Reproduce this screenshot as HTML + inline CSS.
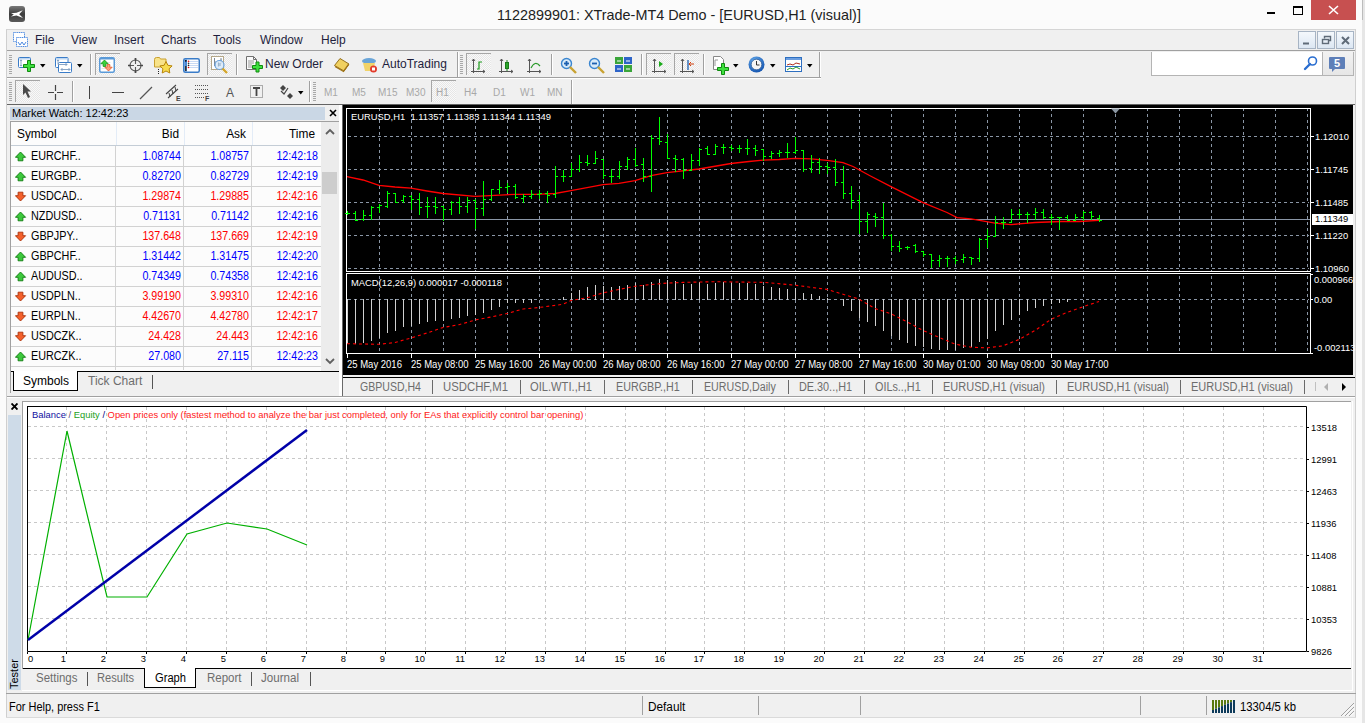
<!DOCTYPE html><html><head><meta charset="utf-8"><style>
*{margin:0;padding:0;box-sizing:border-box}
html,body{width:1365px;height:723px;overflow:hidden;background:#fbfbfb;font-family:"Liberation Sans", sans-serif;position:relative}
div{position:absolute}
.t{white-space:pre;font-size:11px;line-height:13px;color:#000}
svg{position:absolute;left:0;top:0}

</style></head><body>
<div style="left:0px;top:0px;width:1362px;height:29px;background:#fbfbfb"></div>
<div style="left:1362px;top:0px;width:3px;height:723px;background:#e6e6e6"></div>
<div style="left:1362px;top:0px;width:1px;height:20px;background:#bcbcbc"></div>
<div class="t" style="left:497px;top:6px;font-size:14.4px;line-height:18px;color:#222">1122899901: XTrade-MT4 Demo - [EURUSD,H1 (visual)]</div>
<div style="left:9px;top:6px;width:16px;height:16px;border-radius:3px;background:linear-gradient(#7a7a7a,#3c3c3c 50%,#5a5a5a)"></div>
<svg style="left:9px;top:6px" width="16" height="16"><path d="M2 7.2 L7.5 6.8 L13.8 4.2 L10.2 8.2 L14 12 L7.5 9.6 L2 10.4 L4.8 8.6Z" fill="#fff"/></svg>
<div style="left:1267px;top:12px;width:8px;height:2px;background:#000"></div>
<div style="left:1293px;top:6px;width:10px;height:9px;border:1px solid #000;border-top-width:2px"></div>
<div style="left:1311px;top:0px;width:45px;height:20px;background:#c75050"></div>
<svg style="left:1311px;top:0" width="45" height="20"><path d="M18 6 L27 14 M27 6 L18 14" stroke="#fff" stroke-width="1.6"/></svg>
<div style="left:6px;top:29px;width:1350px;height:694px;background:#f0f0f0;border-left:1px solid #cfcfcf;border-right:1px solid #cfcfcf;border-top:1px solid #d5d5d5"></div>
<div style="left:1356px;top:29px;width:6px;height:694px;background:#fbfbfb"></div>
<div class="t" style="left:35px;top:33px;font-size:12px;line-height:15px;color:#1e1e3c">File</div>
<div class="t" style="left:71px;top:33px;font-size:12px;line-height:15px;color:#1e1e3c">View</div>
<div class="t" style="left:114px;top:33px;font-size:12px;line-height:15px;color:#1e1e3c">Insert</div>
<div class="t" style="left:161px;top:33px;font-size:12px;line-height:15px;color:#1e1e3c">Charts</div>
<div class="t" style="left:213px;top:33px;font-size:12px;line-height:15px;color:#1e1e3c">Tools</div>
<div class="t" style="left:260px;top:33px;font-size:12px;line-height:15px;color:#1e1e3c">Window</div>
<div class="t" style="left:321px;top:33px;font-size:12px;line-height:15px;color:#1e1e3c">Help</div>
<div style="left:7px;top:50px;width:1348px;height:1px;background:#a0a0a0"></div>
<div style="left:7px;top:51px;width:1348px;height:1px;background:#fff"></div>
<div style="left:7px;top:104px;width:1348px;height:1px;background:#a0a0a0"></div>
<div style="left:7px;top:51px;width:1348px;height:26px;background:#f0f0f0"></div>
<div style="left:9px;top:55px;width:3px;height:1px;background:#a8a8a8"></div>
<div style="left:9px;top:57px;width:3px;height:1px;background:#a8a8a8"></div>
<div style="left:9px;top:59px;width:3px;height:1px;background:#a8a8a8"></div>
<div style="left:9px;top:61px;width:3px;height:1px;background:#a8a8a8"></div>
<div style="left:9px;top:63px;width:3px;height:1px;background:#a8a8a8"></div>
<div style="left:9px;top:65px;width:3px;height:1px;background:#a8a8a8"></div>
<div style="left:9px;top:67px;width:3px;height:1px;background:#a8a8a8"></div>
<div style="left:9px;top:69px;width:3px;height:1px;background:#a8a8a8"></div>
<div style="left:9px;top:71px;width:3px;height:1px;background:#a8a8a8"></div>
<div style="left:9px;top:73px;width:3px;height:1px;background:#a8a8a8"></div>
<svg style="left:17px;top:56px" width="20" height="17">
<rect x="1.5" y="1.5" width="12" height="10" rx="1" fill="#fff" stroke="#3a7cc8"/>
<rect x="2" y="2" width="11" height="1.5" fill="#bcd6f2"/>
<path d="M4 4v6M3 5l1-1.2 1 1.2M3 9l1 1.2 1-1.2" stroke="#7d9cc0" fill="none" stroke-width="0.9"/>
<path d="M6.5 8.5h4v-4h3v4h4v3h-4v4h-3v-4h-4z" fill="#3ee03e" stroke="#0f8a0f" stroke-width="1"/>
</svg>
<svg style="left:40px;top:64px" width="6" height="4"><path d="M0 0H5.5L2.75 3.5Z" fill="#000"/></svg>
<svg style="left:54px;top:56px" width="20" height="18">
<rect x="1.5" y="1.5" width="12.5" height="10" rx="1" fill="#fff" stroke="#3a7cc8"/>
<rect x="2" y="2" width="11.5" height="1.5" fill="#bcd6f2"/>
<rect x="4.5" y="6.5" width="13" height="10" rx="1" fill="#fff" stroke="#3a7cc8"/>
<path d="M4 4v4.5h9M11.5 7l1.5 1.5-1.5 1.5M7 13.5h9M8.5 12l-1.5 1.5 1.5 1.5M14.5 12l1.5 1.5-1.5 1.5M3 5l1-1.2 1 1.2" stroke="#7d9cc0" fill="none" stroke-width="0.9"/>
</svg>
<svg style="left:77px;top:64px" width="6" height="4"><path d="M0 0H5.5L2.75 3.5Z" fill="#000"/></svg>
<div style="left:90px;top:54px;width:1px;height:21px;background:#a0a0a0"></div>
<div style="left:91px;top:54px;width:1px;height:21px;background:#fff"></div>
<div style="left:95px;top:53px;width:25px;height:22px;border-top:1px solid #a6a6a6;border-left:1px solid #a6a6a6;background-color:#f6f6f6;background-image:repeating-conic-gradient(#e6e6e6 0 25%,#f9f9f9 0 50%);background-size:2px 2px"></div>
<svg style="left:99px;top:57px" width="16" height="16">
<rect x="0.75" y="0.75" width="14.5" height="14.5" rx="1.5" fill="#fff" stroke="#5a9ad8" stroke-width="1.5"/>
<rect x="1" y="1" width="14" height="1.5" fill="#5a9ad8"/>
<path d="M2.5 5.5h9M2.5 8.5h9M2.5 11.5h9" stroke="#e6e6e6"/>
<path d="M1.8 6.8L5.5 3L9.2 6.8H6.8V9.5H4.2V6.8Z" fill="#3ad43a" stroke="#0a8a0a" stroke-width="0.7" stroke-linejoin="round"/>
<path d="M5.8 10.2L9.5 14L13.2 10.2H10.8V7.5H8.2V10.2Z" fill="#ffa080" stroke="#e04a10" stroke-width="0.7" stroke-linejoin="round"/>
</svg>
<svg style="left:127px;top:57px" width="17" height="17">
<circle cx="8.5" cy="8.5" r="5.5" fill="none" stroke="#5a5a5a" stroke-width="1.1"/><path d="M8.5 1v6M8.5 10v6M1 8.5h6M10 8.5h6" stroke="#5a5a5a" stroke-width="1.1"/>
<path d="M8.5 1v3M8.5 13v3M1 8.5h3M13 8.5h3" stroke="#484848" stroke-width="1.7"/>
</svg>
<svg style="left:153px;top:56px" width="21" height="19">
<path d="M1.5 3.5q0-2 2-2h3l1 1.5h5.5v8h-11.5z" fill="#f8e38a" stroke="#c9a030"/>
<path d="M5.5 13v1M5.5 15v1M5.5 17v1" stroke="#222"/>
<path d="M13 5.5l1.9 3.8 4.2.6-3 2.9.7 4.2-3.8-2-3.8 2 .7-4.2-3-2.9 4.2-.6z" fill="#f7dc50" stroke="#b8860b" stroke-width="1"/>
</svg>
<svg style="left:183px;top:58px" width="17" height="15">
<rect x="0.75" y="0.75" width="15.5" height="13.5" rx="1.5" fill="#fff" stroke="#3a7cc8" stroke-width="1.5"/>
<rect x="1.5" y="1.5" width="2.5" height="12" fill="#4a8ad8"/><rect x="2" y="8" width="1.5" height="5" fill="#333"/>
<path d="M6 3.5h9M6 5.5h9M6 7.5h9M6 9.5h9" stroke="#c8daf4"/>
<circle cx="2.8" cy="2.8" r="0.9" fill="#000"/><circle cx="5.5" cy="3.2" r="0.8" fill="#e00"/><circle cx="5.5" cy="5.3" r="0.8" fill="#222"/><circle cx="5.5" cy="7.4" r="0.8" fill="#222"/><circle cx="5.5" cy="9.5" r="0.8" fill="#e00"/>
</svg>
<div style="left:207px;top:53px;width:25px;height:22px;border-top:1px solid #a6a6a6;border-left:1px solid #a6a6a6;background-color:#f6f6f6;background-image:repeating-conic-gradient(#e6e6e6 0 25%,#f9f9f9 0 50%);background-size:2px 2px"></div>
<svg style="left:211px;top:56px" width="19" height="19">
<rect x="0.5" y="0.5" width="12" height="13" fill="#fff" stroke="#b5a88a"/>
<path d="M3.5 2v8M3 6h2M10 2v6M9.5 4h1" stroke="#7a8a9a"/>
<circle cx="8.5" cy="9" r="4.5" fill="#d8e9f8" fill-opacity="0.85" stroke="#6aa0d8" stroke-width="1.2"/>
<path d="M7.5 6.5v4M9 7v3" stroke="#9ab4cc" stroke-width="1.2"/>
<path d="M11.5 12.5l4.5 4.5" stroke="#d4a72c" stroke-width="2.4"/>
</svg>
<div style="left:236px;top:54px;width:1px;height:21px;background:#a0a0a0"></div>
<div style="left:237px;top:54px;width:1px;height:21px;background:#fff"></div>
<svg style="left:245px;top:55px" width="20" height="21">
<path d="M1.5 1.5h7l3 3v10h-10z" fill="#fafafa" stroke="#707070"/><path d="M8.5 1.5v3h3" fill="none" stroke="#707070"/>
<path d="M3 6h6M3 8h6M3 10h4M3 12h4" stroke="#9a9a9a"/>
<path d="M7.5 10.5h3.5v-3.5h3v3.5h3.5v3h-3.5v3.5h-3v-3.5h-3.5z" fill="#3ee03e" stroke="#0f8a0f" stroke-width="1"/>
</svg>
<div class="t" style="left:265px;top:57px;font-size:12px;line-height:15px;color:#1e1e3c">New Order</div>
<svg style="left:333px;top:56px" width="18" height="18">
<path d="M1.5 9.5l5.5-7 9 5.5-5 7z" fill="#f0d060" stroke="#8a6410" stroke-width="0.9"/><path d="M2 10.5l8.5 5 5-7" fill="none" stroke="#a07418" stroke-width="1.3"/>
</svg>
<svg style="left:361px;top:56px" width="18" height="18">
<ellipse cx="8" cy="5" rx="7" ry="3" fill="#6aa5d8"/><path d="M2 7h12l-2 8h-8z" fill="#f1d36a"/>
<circle cx="12.5" cy="13" r="3.5" fill="#e23b2b"/><rect x="11" y="11.5" width="3" height="3" fill="#fff"/>
</svg>
<div class="t" style="left:382px;top:57px;font-size:12px;line-height:15px;color:#1e1e3c">AutoTrading</div>
<div style="left:457px;top:52px;width:1px;height:25px;background:#a0a0a0"></div>
<div style="left:458px;top:52px;width:1px;height:25px;background:#fff"></div>
<div style="left:460px;top:55px;width:3px;height:1px;background:#a8a8a8"></div>
<div style="left:460px;top:57px;width:3px;height:1px;background:#a8a8a8"></div>
<div style="left:460px;top:59px;width:3px;height:1px;background:#a8a8a8"></div>
<div style="left:460px;top:61px;width:3px;height:1px;background:#a8a8a8"></div>
<div style="left:460px;top:63px;width:3px;height:1px;background:#a8a8a8"></div>
<div style="left:460px;top:65px;width:3px;height:1px;background:#a8a8a8"></div>
<div style="left:460px;top:67px;width:3px;height:1px;background:#a8a8a8"></div>
<div style="left:460px;top:69px;width:3px;height:1px;background:#a8a8a8"></div>
<div style="left:460px;top:71px;width:3px;height:1px;background:#a8a8a8"></div>
<div style="left:460px;top:73px;width:3px;height:1px;background:#a8a8a8"></div>
<div style="left:466px;top:53px;width:25px;height:22px;border-top:1px solid #a6a6a6;border-left:1px solid #a6a6a6;background-color:#f6f6f6;background-image:repeating-conic-gradient(#e6e6e6 0 25%,#f9f9f9 0 50%);background-size:2px 2px"></div>
<svg style="left:471px;top:58px" width="16" height="16">
<path d="M2.5 1v14M0 13.5h14" stroke="#555" stroke-width="1"/><path d="M1 3l1.5-2 1.5 2M12 12l2 1.5-2 1.5" fill="none" stroke="#555"/><path d="M6 11h2v-7h3" fill="none" stroke="#1a9a1a" stroke-width="1.2"/></svg>
<svg style="left:499px;top:58px" width="16" height="16">
<path d="M2.5 1v14M0 13.5h14" stroke="#555" stroke-width="1"/><path d="M1 3l1.5-2 1.5 2M12 12l2 1.5-2 1.5" fill="none" stroke="#555"/><rect x="6.5" y="4.5" width="3" height="6" fill="#3cd03c" stroke="#1a7a1a"/><path d="M8 2v11" stroke="#1a7a1a"/></svg>
<svg style="left:527px;top:58px" width="16" height="16">
<path d="M2.5 1v14M0 13.5h14" stroke="#555" stroke-width="1"/><path d="M1 3l1.5-2 1.5 2M12 12l2 1.5-2 1.5" fill="none" stroke="#555"/><path d="M4 10q4-8 9-2" fill="none" stroke="#2a9a2a" stroke-width="1.2"/></svg>
<div style="left:551px;top:54px;width:1px;height:21px;background:#a0a0a0"></div>
<div style="left:552px;top:54px;width:1px;height:21px;background:#fff"></div>
<svg style="left:560px;top:57px" width="18" height="18">
<circle cx="6.5" cy="6.5" r="5" fill="#d8eaf8" stroke="#3a86d0" stroke-width="1.4"/><path d="M4 6.5h5" stroke="#1b5fb0" stroke-width="1.8"/><path d="M6.5 4v5" stroke="#1b5fb0" stroke-width="1.8"/><path d="M10 10l6 6" stroke="#c9a232" stroke-width="2.4"/></svg>
<svg style="left:588px;top:57px" width="18" height="18">
<circle cx="6.5" cy="6.5" r="5" fill="#d8eaf8" stroke="#3a86d0" stroke-width="1.4"/><path d="M4 6.5h5" stroke="#1b5fb0" stroke-width="1.8"/><path d="M10 10l6 6" stroke="#c9a232" stroke-width="2.4"/></svg>
<svg style="left:615px;top:57px" width="17" height="16">
<rect x="0" y="0" width="8" height="7" fill="#3aa53a"/><rect x="9" y="0" width="8" height="7" fill="#2d64c8"/>
<rect x="0" y="8" width="8" height="7" fill="#2d64c8"/><rect x="9" y="8" width="8" height="7" fill="#3aa53a"/>
<path d="M2 4h4M11 4h4M2 12h4M11 12h4" stroke="#fff"/></svg>
<div style="left:641px;top:54px;width:1px;height:21px;background:#a0a0a0"></div>
<div style="left:642px;top:54px;width:1px;height:21px;background:#fff"></div>
<div style="left:646px;top:53px;width:25px;height:22px;border-top:1px solid #a6a6a6;border-left:1px solid #a6a6a6;background-color:#f6f6f6;background-image:repeating-conic-gradient(#e6e6e6 0 25%,#f9f9f9 0 50%);background-size:2px 2px"></div>
<svg style="left:652px;top:58px" width="16" height="16">
<path d="M2.5 1v14M0 13.5h14" stroke="#555" stroke-width="1"/><path d="M1 3l1.5-2 1.5 2M12 12l2 1.5-2 1.5" fill="none" stroke="#555"/><path d="M7 3l4 3-4 3z" fill="#1aaa1a"/></svg>
<div style="left:674px;top:53px;width:25px;height:22px;border-top:1px solid #a6a6a6;border-left:1px solid #a6a6a6;background-color:#f6f6f6;background-image:repeating-conic-gradient(#e6e6e6 0 25%,#f9f9f9 0 50%);background-size:2px 2px"></div>
<svg style="left:680px;top:58px" width="16" height="16">
<path d="M2.5 1v14M0 13.5h14" stroke="#555" stroke-width="1"/><path d="M1 3l1.5-2 1.5 2M12 12l2 1.5-2 1.5" fill="none" stroke="#555"/><path d="M8 2v10" stroke="#1b5fb0" stroke-width="1.3"/><path d="M14 6h-4M11 4l-2 2 2 2" stroke="#d04010" fill="none"/></svg>
<div style="left:703px;top:54px;width:1px;height:21px;background:#a0a0a0"></div>
<div style="left:704px;top:54px;width:1px;height:21px;background:#fff"></div>
<svg style="left:712px;top:56px" width="18" height="19">
<path d="M1.5 0.5h7l3 3v10h-10z" fill="#fff" stroke="#888"/><path d="M3 4v6M3 4h3" stroke="#999"/>
<path d="M5.5 11.5h4v-4h3v4h4v3h-4v4h-3v-4h-4z" fill="#3ee03e" stroke="#0f8a0f" stroke-width="1"/>
</svg>
<svg style="left:733px;top:64px" width="6" height="4"><path d="M0 0H5.5L2.75 3.5Z" fill="#000"/></svg>
<svg style="left:748px;top:56px" width="18" height="18">
<defs><radialGradient id="cg" cx="0.4" cy="0.3" r="0.8"><stop offset="0" stop-color="#6ab0f0"/><stop offset="1" stop-color="#0a4aa8"/></radialGradient></defs><circle cx="8.5" cy="8.5" r="8" fill="url(#cg)"/><circle cx="8.5" cy="8.5" r="5.3" fill="#f4f4f4" stroke="#0a3a80" stroke-width="0.6"/><path d="M8.5 5v4h3" stroke="#333" fill="none"/></svg>
<svg style="left:770px;top:64px" width="6" height="4"><path d="M0 0H5.5L2.75 3.5Z" fill="#000"/></svg>
<svg style="left:785px;top:57px" width="18" height="15">
<rect x="0.5" y="0.5" width="16" height="14" fill="#fff" stroke="#2e6fc0"/><rect x="1" y="1" width="15" height="2" fill="#6c9ee0"/>
<path d="M2 8l3-1 3 1 3-2 4 1" stroke="#b03020" fill="none"/><path d="M1 9.5h15" stroke="#2e6fc0"/><path d="M2 13l3-2 3 1 3-2 4 2" stroke="#2a9a2a" fill="none"/></svg>
<svg style="left:807px;top:64px" width="6" height="4"><path d="M0 0H5.5L2.75 3.5Z" fill="#000"/></svg>
<div style="left:819px;top:52px;width:1px;height:25px;background:#a0a0a0"></div>
<div style="left:820px;top:52px;width:1px;height:25px;background:#fff"></div>
<div style="left:7px;top:77px;width:814px;height:1px;background:#a0a0a0"></div>
<div style="left:7px;top:78px;width:814px;height:1px;background:#fff"></div>
<div style="left:1151px;top:52px;width:171px;height:24px;background:#fff;border:1px solid #b4b4b4;border-right:none;border-top:none"></div>
<svg style="left:1303px;top:55px" width="16" height="16">
<circle cx="9.5" cy="6" r="4" fill="#fff" stroke="#2a6ed0" stroke-width="1.6"/><path d="M7 9l-5 5" stroke="#2a6ed0" stroke-width="2.4" stroke-linecap="round"/></svg>
<div style="left:1322px;top:52px;width:32px;height:24px;background:linear-gradient(#f2f2f2,#e6e6e6);border-left:1px solid #b4b4b4;border-right:1px solid #b4b4b4;border-bottom:1px solid #b4b4b4"></div>
<svg style="left:1329px;top:57px" width="18" height="16">
<rect x="0" y="0" width="16" height="12" rx="1" fill="#5e7fb8"/><path d="M3 12l0 3 3-3z" fill="#5e7fb8"/></svg>
<div class="t" style="left:1334px;top:57px;font-size:11px;line-height:12px;color:#fff;font-weight:bold">5</div>
<div style="left:9px;top:82px;width:3px;height:1px;background:#a8a8a8"></div>
<div style="left:9px;top:84px;width:3px;height:1px;background:#a8a8a8"></div>
<div style="left:9px;top:86px;width:3px;height:1px;background:#a8a8a8"></div>
<div style="left:9px;top:88px;width:3px;height:1px;background:#a8a8a8"></div>
<div style="left:9px;top:90px;width:3px;height:1px;background:#a8a8a8"></div>
<div style="left:9px;top:92px;width:3px;height:1px;background:#a8a8a8"></div>
<div style="left:9px;top:94px;width:3px;height:1px;background:#a8a8a8"></div>
<div style="left:9px;top:96px;width:3px;height:1px;background:#a8a8a8"></div>
<div style="left:9px;top:98px;width:3px;height:1px;background:#a8a8a8"></div>
<div style="left:9px;top:100px;width:3px;height:1px;background:#a8a8a8"></div>
<div style="left:15px;top:80px;width:25px;height:22px;border-top:1px solid #a6a6a6;border-left:1px solid #a6a6a6;background-color:#f6f6f6;background-image:repeating-conic-gradient(#e6e6e6 0 25%,#f9f9f9 0 50%);background-size:2px 2px"></div>
<svg style="left:22px;top:84px" width="12" height="15">
<path d="M1 0L1 11 3.5 8.5 6 14 8 13 5.5 7.5 9 7.5Z" fill="#4a4a4a"/></svg>
<svg style="left:47px;top:84px" width="17" height="17">
<path d="M8.5 1v6M8.5 10v6M1 8.5h6M10 8.5h6" stroke="#444" stroke-width="1.2"/></svg>
<div style="left:72px;top:81px;width:1px;height:21px;background:#a0a0a0"></div>
<div style="left:73px;top:81px;width:1px;height:21px;background:#fff"></div>
<div style="left:89px;top:86px;width:1px;height:13px;background:#444"></div>
<div style="left:112px;top:92px;width:12px;height:1px;background:#444"></div>
<svg style="left:139px;top:86px" width="14" height="14"><path d="M1 13L13 1" stroke="#555" stroke-width="1.2"/></svg>
<svg style="left:165px;top:84px" width="18" height="18">
<path d="M1 10L11 1M3 14L13 5" stroke="#444" stroke-width="1.1"/><path d="M4 9l1 4M7 6l1 4M10 3l1 4" stroke="#444"/>
<text x="11" y="17" font-size="7" font-family="Liberation Sans" font-weight="bold" fill="#444">E</text></svg>
<svg style="left:194px;top:84px" width="18" height="18">
<path d="M1 1.5h13M1 5.5h13M1 9.5h13M1 13.5h10" stroke="#555" stroke-dasharray="1 1"/>
<text x="11" y="17" font-size="7" font-family="Liberation Sans" font-weight="bold" fill="#444">F</text></svg>
<div class="t" style="left:226px;top:86px;font-size:12px;line-height:14px;color:#555">A</div>
<svg style="left:250px;top:85px" width="14" height="14">
<rect x="0.5" y="0.5" width="12" height="12" fill="none" stroke="#666" stroke-dasharray="1 1"/>
<path d="M3 3h7M6.5 3v8" stroke="#444" stroke-width="1.8"/></svg>
<svg style="left:279px;top:84px" width="16" height="16">
<path d="M1 4l3-3 3 3-3 3z" fill="#444"/><path d="M8 12l3-3 3 3-3 3z" fill="#444"/><path d="M2 7l3 3 4-6" stroke="#444" fill="none" stroke-width="1.2"/></svg>
<svg style="left:298px;top:91px" width="6" height="4"><path d="M0 0H5.5L2.75 3.5Z" fill="#000"/></svg>
<div style="left:309px;top:81px;width:1px;height:21px;background:#a0a0a0"></div>
<div style="left:310px;top:81px;width:1px;height:21px;background:#fff"></div>
<div style="left:313px;top:82px;width:3px;height:1px;background:#a8a8a8"></div>
<div style="left:313px;top:84px;width:3px;height:1px;background:#a8a8a8"></div>
<div style="left:313px;top:86px;width:3px;height:1px;background:#a8a8a8"></div>
<div style="left:313px;top:88px;width:3px;height:1px;background:#a8a8a8"></div>
<div style="left:313px;top:90px;width:3px;height:1px;background:#a8a8a8"></div>
<div style="left:313px;top:92px;width:3px;height:1px;background:#a8a8a8"></div>
<div style="left:313px;top:94px;width:3px;height:1px;background:#a8a8a8"></div>
<div style="left:313px;top:96px;width:3px;height:1px;background:#a8a8a8"></div>
<div style="left:313px;top:98px;width:3px;height:1px;background:#a8a8a8"></div>
<div style="left:313px;top:100px;width:3px;height:1px;background:#a8a8a8"></div>
<div class="t" style="left:324px;top:87px;font-size:10px;line-height:12px;color:#a8a8a8">M1</div>
<div class="t" style="left:352px;top:87px;font-size:10px;line-height:12px;color:#a8a8a8">M5</div>
<div class="t" style="left:378px;top:87px;font-size:10px;line-height:12px;color:#a8a8a8">M15</div>
<div class="t" style="left:406px;top:87px;font-size:10px;line-height:12px;color:#a8a8a8">M30</div>
<div style="left:431px;top:80px;width:25px;height:22px;border-top:1px solid #a6a6a6;border-left:1px solid #a6a6a6;background-color:#f6f6f6;background-image:repeating-conic-gradient(#e6e6e6 0 25%,#f9f9f9 0 50%);background-size:2px 2px"></div>
<div class="t" style="left:436px;top:87px;font-size:10px;line-height:12px;color:#a8a8a8">H1</div>
<div class="t" style="left:464px;top:87px;font-size:10px;line-height:12px;color:#a8a8a8">H4</div>
<div class="t" style="left:493px;top:87px;font-size:10px;line-height:12px;color:#a8a8a8">D1</div>
<div class="t" style="left:520px;top:87px;font-size:10px;line-height:12px;color:#a8a8a8">W1</div>
<div class="t" style="left:547px;top:87px;font-size:10px;line-height:12px;color:#a8a8a8">MN</div>
<div style="left:571px;top:80px;width:1px;height:24px;background:#a0a0a0"></div>
<div style="left:572px;top:80px;width:1px;height:24px;background:#fff"></div>
<div style="left:7px;top:104px;width:1348px;height:1px;background:#646464"></div>
<div style="left:1298px;top:31px;width:18px;height:18px;background:linear-gradient(#f4f8fc,#dce7f3);border:1px solid #a7b4c4"></div>
<div style="left:1317px;top:31px;width:18px;height:18px;background:linear-gradient(#f4f8fc,#dce7f3);border:1px solid #a7b4c4"></div>
<div style="left:1336px;top:31px;width:18px;height:18px;background:linear-gradient(#f4f8fc,#dce7f3);border:1px solid #a7b4c4"></div>
<svg style="left:1298px;top:31px" width="56" height="18">
<path d="M5 12.5h6" stroke="#5f6b78" stroke-width="2"/>
<rect x="24.5" y="8.5" width="6" height="4" fill="none" stroke="#5f6b78" stroke-width="1.4"/><path d="M26.5 7.5v-2h6v4h-2" fill="none" stroke="#5f6b78" stroke-width="1.4"/>
<path d="M44 6l7 7M51 6l-7 7" stroke="#5f6b78" stroke-width="2"/></svg>
<svg style="left:13px;top:32px" width="16" height="16">
<rect x="0.5" y="0.5" width="11" height="9" fill="#fff" stroke="#4d8ae0" stroke-dasharray="1.2 0.6"/>
<rect x="3.5" y="5.5" width="11" height="9" fill="#fff" stroke="#4d8ae0" stroke-dasharray="1.2 0.6"/>
<path d="M5 10l2 3 2-3 2 3 2-3" stroke="#4d8ae0" fill="none"/></svg>
<div style="left:10px;top:107px;width:315px;height:13px;background:#cad7e5"></div>
<div class="t" style="left:12px;top:107px;font-size:11px;line-height:13px;color:#000">Market Watch: 12:42:23</div>
<svg style="left:329px;top:109px" width="9" height="9"><path d="M1 1l6 6M7 1l-6 6" stroke="#000" stroke-width="1.6"/></svg>
<div style="left:10px;top:121px;width:311px;height:250px;background:#fcfcfc;border-top:1px solid #a0a0a0;border-left:1px solid #a0a0a0"></div>
<div style="left:11px;top:122px;width:310px;height:24px;background:#fcfcfc"></div>
<div style="left:11px;top:145px;width:310px;height:1px;background:#c4cdd6"></div>
<div style="left:116px;top:122px;width:1px;height:23px;background:#e3ecf7"></div>
<div style="left:184px;top:122px;width:1px;height:23px;background:#e3ecf7"></div>
<div style="left:252px;top:122px;width:1px;height:23px;background:#e3ecf7"></div>
<div class="t" style="left:17px;top:127px;font-size:12.5px;line-height:14px;transform:scaleX(0.95);transform-origin:0 0">Symbol</div>
<div class="t" style="left:119px;top:127px;width:60px;text-align:right;font-size:12.5px;line-height:14px;transform:scaleX(0.95);transform-origin:100% 0">Bid</div>
<div class="t" style="left:186px;top:127px;width:60px;text-align:right;font-size:12.5px;line-height:14px;transform:scaleX(0.95);transform-origin:100% 0">Ask</div>
<div class="t" style="left:255px;top:127px;width:60px;text-align:right;font-size:12.5px;line-height:14px;transform:scaleX(0.95);transform-origin:100% 0">Time</div>
<div style="left:11px;top:166px;width:310px;height:1px;background:#d2d2d2"></div>
<svg style="left:15px;top:151px" width="12" height="11"><path d="M5.5 1L10.6 6.3H7.9V9.8H3.1V6.3H0.4Z" fill="#3cc83c" stroke="#0d7a0d" stroke-width="0.9" stroke-linejoin="round"/></svg>
<div class="t" style="left:31px;top:149px;font-size:12px;line-height:14px;color:#000;transform:scaleX(0.9);transform-origin:0 0">EURCHF..</div>
<div class="t" style="left:101px;top:149px;width:80px;text-align:right;color:#0000ff;font-size:12px;line-height:14px;transform:scaleX(0.89);transform-origin:100% 0">1.08744</div>
<div class="t" style="left:169px;top:149px;width:80px;text-align:right;color:#0000ff;font-size:12px;line-height:14px;transform:scaleX(0.89);transform-origin:100% 0">1.08757</div>
<div class="t" style="left:238px;top:149px;width:80px;text-align:right;color:#0000ff;font-size:12px;line-height:14px;transform:scaleX(0.89);transform-origin:100% 0">12:42:18</div>
<div style="left:11px;top:186px;width:310px;height:1px;background:#d2d2d2"></div>
<svg style="left:15px;top:171px" width="12" height="11"><path d="M5.5 1L10.6 6.3H7.9V9.8H3.1V6.3H0.4Z" fill="#3cc83c" stroke="#0d7a0d" stroke-width="0.9" stroke-linejoin="round"/></svg>
<div class="t" style="left:31px;top:169px;font-size:12px;line-height:14px;color:#000;transform:scaleX(0.9);transform-origin:0 0">EURGBP..</div>
<div class="t" style="left:101px;top:169px;width:80px;text-align:right;color:#0000ff;font-size:12px;line-height:14px;transform:scaleX(0.89);transform-origin:100% 0">0.82720</div>
<div class="t" style="left:169px;top:169px;width:80px;text-align:right;color:#0000ff;font-size:12px;line-height:14px;transform:scaleX(0.89);transform-origin:100% 0">0.82729</div>
<div class="t" style="left:238px;top:169px;width:80px;text-align:right;color:#0000ff;font-size:12px;line-height:14px;transform:scaleX(0.89);transform-origin:100% 0">12:42:19</div>
<div style="left:11px;top:206px;width:310px;height:1px;background:#d2d2d2"></div>
<svg style="left:15px;top:191px" width="12" height="11"><path d="M5.5 10L10.6 4.7H7.9V1.2H3.1V4.7H0.4Z" fill="#f4602a" stroke="#a8300a" stroke-width="0.9" stroke-linejoin="round"/></svg>
<div class="t" style="left:31px;top:189px;font-size:12px;line-height:14px;color:#000;transform:scaleX(0.9);transform-origin:0 0">USDCAD..</div>
<div class="t" style="left:101px;top:189px;width:80px;text-align:right;color:#ff0000;font-size:12px;line-height:14px;transform:scaleX(0.89);transform-origin:100% 0">1.29874</div>
<div class="t" style="left:169px;top:189px;width:80px;text-align:right;color:#ff0000;font-size:12px;line-height:14px;transform:scaleX(0.89);transform-origin:100% 0">1.29885</div>
<div class="t" style="left:238px;top:189px;width:80px;text-align:right;color:#ff0000;font-size:12px;line-height:14px;transform:scaleX(0.89);transform-origin:100% 0">12:42:16</div>
<div style="left:11px;top:226px;width:310px;height:1px;background:#d2d2d2"></div>
<svg style="left:15px;top:211px" width="12" height="11"><path d="M5.5 1L10.6 6.3H7.9V9.8H3.1V6.3H0.4Z" fill="#3cc83c" stroke="#0d7a0d" stroke-width="0.9" stroke-linejoin="round"/></svg>
<div class="t" style="left:31px;top:209px;font-size:12px;line-height:14px;color:#000;transform:scaleX(0.9);transform-origin:0 0">NZDUSD..</div>
<div class="t" style="left:101px;top:209px;width:80px;text-align:right;color:#0000ff;font-size:12px;line-height:14px;transform:scaleX(0.89);transform-origin:100% 0">0.71131</div>
<div class="t" style="left:169px;top:209px;width:80px;text-align:right;color:#0000ff;font-size:12px;line-height:14px;transform:scaleX(0.89);transform-origin:100% 0">0.71142</div>
<div class="t" style="left:238px;top:209px;width:80px;text-align:right;color:#0000ff;font-size:12px;line-height:14px;transform:scaleX(0.89);transform-origin:100% 0">12:42:16</div>
<div style="left:11px;top:246px;width:310px;height:1px;background:#d2d2d2"></div>
<svg style="left:15px;top:231px" width="12" height="11"><path d="M5.5 10L10.6 4.7H7.9V1.2H3.1V4.7H0.4Z" fill="#f4602a" stroke="#a8300a" stroke-width="0.9" stroke-linejoin="round"/></svg>
<div class="t" style="left:31px;top:229px;font-size:12px;line-height:14px;color:#000;transform:scaleX(0.9);transform-origin:0 0">GBPJPY..</div>
<div class="t" style="left:101px;top:229px;width:80px;text-align:right;color:#ff0000;font-size:12px;line-height:14px;transform:scaleX(0.89);transform-origin:100% 0">137.648</div>
<div class="t" style="left:169px;top:229px;width:80px;text-align:right;color:#ff0000;font-size:12px;line-height:14px;transform:scaleX(0.89);transform-origin:100% 0">137.669</div>
<div class="t" style="left:238px;top:229px;width:80px;text-align:right;color:#ff0000;font-size:12px;line-height:14px;transform:scaleX(0.89);transform-origin:100% 0">12:42:19</div>
<div style="left:11px;top:266px;width:310px;height:1px;background:#d2d2d2"></div>
<svg style="left:15px;top:251px" width="12" height="11"><path d="M5.5 1L10.6 6.3H7.9V9.8H3.1V6.3H0.4Z" fill="#3cc83c" stroke="#0d7a0d" stroke-width="0.9" stroke-linejoin="round"/></svg>
<div class="t" style="left:31px;top:249px;font-size:12px;line-height:14px;color:#000;transform:scaleX(0.9);transform-origin:0 0">GBPCHF..</div>
<div class="t" style="left:101px;top:249px;width:80px;text-align:right;color:#0000ff;font-size:12px;line-height:14px;transform:scaleX(0.89);transform-origin:100% 0">1.31442</div>
<div class="t" style="left:169px;top:249px;width:80px;text-align:right;color:#0000ff;font-size:12px;line-height:14px;transform:scaleX(0.89);transform-origin:100% 0">1.31475</div>
<div class="t" style="left:238px;top:249px;width:80px;text-align:right;color:#0000ff;font-size:12px;line-height:14px;transform:scaleX(0.89);transform-origin:100% 0">12:42:20</div>
<div style="left:11px;top:286px;width:310px;height:1px;background:#d2d2d2"></div>
<svg style="left:15px;top:271px" width="12" height="11"><path d="M5.5 1L10.6 6.3H7.9V9.8H3.1V6.3H0.4Z" fill="#3cc83c" stroke="#0d7a0d" stroke-width="0.9" stroke-linejoin="round"/></svg>
<div class="t" style="left:31px;top:269px;font-size:12px;line-height:14px;color:#000;transform:scaleX(0.9);transform-origin:0 0">AUDUSD..</div>
<div class="t" style="left:101px;top:269px;width:80px;text-align:right;color:#0000ff;font-size:12px;line-height:14px;transform:scaleX(0.89);transform-origin:100% 0">0.74349</div>
<div class="t" style="left:169px;top:269px;width:80px;text-align:right;color:#0000ff;font-size:12px;line-height:14px;transform:scaleX(0.89);transform-origin:100% 0">0.74358</div>
<div class="t" style="left:238px;top:269px;width:80px;text-align:right;color:#0000ff;font-size:12px;line-height:14px;transform:scaleX(0.89);transform-origin:100% 0">12:42:16</div>
<div style="left:11px;top:306px;width:310px;height:1px;background:#d2d2d2"></div>
<svg style="left:15px;top:291px" width="12" height="11"><path d="M5.5 10L10.6 4.7H7.9V1.2H3.1V4.7H0.4Z" fill="#f4602a" stroke="#a8300a" stroke-width="0.9" stroke-linejoin="round"/></svg>
<div class="t" style="left:31px;top:289px;font-size:12px;line-height:14px;color:#000;transform:scaleX(0.9);transform-origin:0 0">USDPLN..</div>
<div class="t" style="left:101px;top:289px;width:80px;text-align:right;color:#ff0000;font-size:12px;line-height:14px;transform:scaleX(0.89);transform-origin:100% 0">3.99190</div>
<div class="t" style="left:169px;top:289px;width:80px;text-align:right;color:#ff0000;font-size:12px;line-height:14px;transform:scaleX(0.89);transform-origin:100% 0">3.99310</div>
<div class="t" style="left:238px;top:289px;width:80px;text-align:right;color:#ff0000;font-size:12px;line-height:14px;transform:scaleX(0.89);transform-origin:100% 0">12:42:16</div>
<div style="left:11px;top:326px;width:310px;height:1px;background:#d2d2d2"></div>
<svg style="left:15px;top:311px" width="12" height="11"><path d="M5.5 10L10.6 4.7H7.9V1.2H3.1V4.7H0.4Z" fill="#f4602a" stroke="#a8300a" stroke-width="0.9" stroke-linejoin="round"/></svg>
<div class="t" style="left:31px;top:309px;font-size:12px;line-height:14px;color:#000;transform:scaleX(0.9);transform-origin:0 0">EURPLN..</div>
<div class="t" style="left:101px;top:309px;width:80px;text-align:right;color:#ff0000;font-size:12px;line-height:14px;transform:scaleX(0.89);transform-origin:100% 0">4.42670</div>
<div class="t" style="left:169px;top:309px;width:80px;text-align:right;color:#ff0000;font-size:12px;line-height:14px;transform:scaleX(0.89);transform-origin:100% 0">4.42780</div>
<div class="t" style="left:238px;top:309px;width:80px;text-align:right;color:#ff0000;font-size:12px;line-height:14px;transform:scaleX(0.89);transform-origin:100% 0">12:42:17</div>
<div style="left:11px;top:346px;width:310px;height:1px;background:#d2d2d2"></div>
<svg style="left:15px;top:331px" width="12" height="11"><path d="M5.5 10L10.6 4.7H7.9V1.2H3.1V4.7H0.4Z" fill="#f4602a" stroke="#a8300a" stroke-width="0.9" stroke-linejoin="round"/></svg>
<div class="t" style="left:31px;top:329px;font-size:12px;line-height:14px;color:#000;transform:scaleX(0.9);transform-origin:0 0">USDCZK..</div>
<div class="t" style="left:101px;top:329px;width:80px;text-align:right;color:#ff0000;font-size:12px;line-height:14px;transform:scaleX(0.89);transform-origin:100% 0">24.428</div>
<div class="t" style="left:169px;top:329px;width:80px;text-align:right;color:#ff0000;font-size:12px;line-height:14px;transform:scaleX(0.89);transform-origin:100% 0">24.443</div>
<div class="t" style="left:238px;top:329px;width:80px;text-align:right;color:#ff0000;font-size:12px;line-height:14px;transform:scaleX(0.89);transform-origin:100% 0">12:42:16</div>
<div style="left:11px;top:366px;width:310px;height:1px;background:#d2d2d2"></div>
<svg style="left:15px;top:351px" width="12" height="11"><path d="M5.5 1L10.6 6.3H7.9V9.8H3.1V6.3H0.4Z" fill="#3cc83c" stroke="#0d7a0d" stroke-width="0.9" stroke-linejoin="round"/></svg>
<div class="t" style="left:31px;top:349px;font-size:12px;line-height:14px;color:#000;transform:scaleX(0.9);transform-origin:0 0">EURCZK..</div>
<div class="t" style="left:101px;top:349px;width:80px;text-align:right;color:#0000ff;font-size:12px;line-height:14px;transform:scaleX(0.89);transform-origin:100% 0">27.080</div>
<div class="t" style="left:169px;top:349px;width:80px;text-align:right;color:#0000ff;font-size:12px;line-height:14px;transform:scaleX(0.89);transform-origin:100% 0">27.115</div>
<div class="t" style="left:238px;top:349px;width:80px;text-align:right;color:#0000ff;font-size:12px;line-height:14px;transform:scaleX(0.89);transform-origin:100% 0">12:42:23</div>
<div style="left:115px;top:146px;width:1px;height:224px;background:#d2d2d2"></div>
<div style="left:183px;top:146px;width:1px;height:224px;background:#d2d2d2"></div>
<div style="left:251px;top:146px;width:1px;height:224px;background:#d2d2d2"></div>
<div style="left:321px;top:121px;width:18px;height:250px;background:#ececec;border-top:1px solid #a0a0a0"></div>
<div style="left:322px;top:172px;width:15px;height:22px;background:#cdcdcd"></div>
<svg style="left:325px;top:128px" width="10" height="7"><path d="M1 6l4-4 4 4" stroke="#606060" stroke-width="1.8" fill="none"/></svg>
<svg style="left:325px;top:358px" width="10" height="7"><path d="M1 1l4 4 4-4" stroke="#606060" stroke-width="1.8" fill="none"/></svg>
<div style="left:10px;top:371px;width:331px;height:22px;background:#f0f0f0"></div>
<div style="left:77px;top:371px;width:264px;height:1px;background:#000"></div>
<div style="left:13px;top:371px;width:65px;height:20px;background:#fff;border:1px solid #000;border-top:none"></div>
<div style="left:10px;top:371px;width:1px;height:22px;background:#a0a0a0"></div>
<div style="left:11px;top:371px;width:3px;height:1px;background:#000"></div>
<div class="t" style="left:23px;top:374px;font-size:12px;line-height:14px;color:#000">Symbols</div>
<div class="t" style="left:88px;top:374px;font-size:12px;line-height:14px;color:#6d6d6d">Tick Chart</div>
<div style="left:152px;top:375px;width:1px;height:14px;background:#555"></div>
<div style="left:339px;top:105px;width:3px;height:292px;background:#fff"></div>
<div style="left:342px;top:105px;width:1px;height:292px;background:#696969"></div>
<div style="left:343px;top:105px;width:1010px;height:270px;background:#000"></div>
<div style="left:1353px;top:105px;width:2px;height:272px;background:#f0f0f0"></div>
<svg style="left:0;top:0" width="1365" height="723"><path d="M379.5 108V271" stroke="#8a96a6" stroke-dasharray="3 3"/><path d="M379.5 276V353" stroke="#8a96a6" stroke-dasharray="3 3"/><path d="M411.5 108V271" stroke="#8a96a6" stroke-dasharray="3 3"/><path d="M411.5 276V353" stroke="#8a96a6" stroke-dasharray="3 3"/><path d="M443.5 108V271" stroke="#8a96a6" stroke-dasharray="3 3"/><path d="M443.5 276V353" stroke="#8a96a6" stroke-dasharray="3 3"/><path d="M475.5 108V271" stroke="#8a96a6" stroke-dasharray="3 3"/><path d="M475.5 276V353" stroke="#8a96a6" stroke-dasharray="3 3"/><path d="M507.5 108V271" stroke="#8a96a6" stroke-dasharray="3 3"/><path d="M507.5 276V353" stroke="#8a96a6" stroke-dasharray="3 3"/><path d="M539.5 108V271" stroke="#8a96a6" stroke-dasharray="3 3"/><path d="M539.5 276V353" stroke="#8a96a6" stroke-dasharray="3 3"/><path d="M571.5 108V271" stroke="#8a96a6" stroke-dasharray="3 3"/><path d="M571.5 276V353" stroke="#8a96a6" stroke-dasharray="3 3"/><path d="M603.5 108V271" stroke="#8a96a6" stroke-dasharray="3 3"/><path d="M603.5 276V353" stroke="#8a96a6" stroke-dasharray="3 3"/><path d="M635.5 108V271" stroke="#8a96a6" stroke-dasharray="3 3"/><path d="M635.5 276V353" stroke="#8a96a6" stroke-dasharray="3 3"/><path d="M667.5 108V271" stroke="#8a96a6" stroke-dasharray="3 3"/><path d="M667.5 276V353" stroke="#8a96a6" stroke-dasharray="3 3"/><path d="M699.5 108V271" stroke="#8a96a6" stroke-dasharray="3 3"/><path d="M699.5 276V353" stroke="#8a96a6" stroke-dasharray="3 3"/><path d="M731.5 108V271" stroke="#8a96a6" stroke-dasharray="3 3"/><path d="M731.5 276V353" stroke="#8a96a6" stroke-dasharray="3 3"/><path d="M763.5 108V271" stroke="#8a96a6" stroke-dasharray="3 3"/><path d="M763.5 276V353" stroke="#8a96a6" stroke-dasharray="3 3"/><path d="M795.5 108V271" stroke="#8a96a6" stroke-dasharray="3 3"/><path d="M795.5 276V353" stroke="#8a96a6" stroke-dasharray="3 3"/><path d="M827.5 108V271" stroke="#8a96a6" stroke-dasharray="3 3"/><path d="M827.5 276V353" stroke="#8a96a6" stroke-dasharray="3 3"/><path d="M859.5 108V271" stroke="#8a96a6" stroke-dasharray="3 3"/><path d="M859.5 276V353" stroke="#8a96a6" stroke-dasharray="3 3"/><path d="M891.5 108V271" stroke="#8a96a6" stroke-dasharray="3 3"/><path d="M891.5 276V353" stroke="#8a96a6" stroke-dasharray="3 3"/><path d="M923.5 108V271" stroke="#8a96a6" stroke-dasharray="3 3"/><path d="M923.5 276V353" stroke="#8a96a6" stroke-dasharray="3 3"/><path d="M955.5 108V271" stroke="#8a96a6" stroke-dasharray="3 3"/><path d="M955.5 276V353" stroke="#8a96a6" stroke-dasharray="3 3"/><path d="M987.5 108V271" stroke="#8a96a6" stroke-dasharray="3 3"/><path d="M987.5 276V353" stroke="#8a96a6" stroke-dasharray="3 3"/><path d="M1019.5 108V271" stroke="#8a96a6" stroke-dasharray="3 3"/><path d="M1019.5 276V353" stroke="#8a96a6" stroke-dasharray="3 3"/><path d="M1051.5 108V271" stroke="#8a96a6" stroke-dasharray="3 3"/><path d="M1051.5 276V353" stroke="#8a96a6" stroke-dasharray="3 3"/><path d="M1083.5 108V271" stroke="#8a96a6" stroke-dasharray="3 3"/><path d="M1083.5 276V353" stroke="#8a96a6" stroke-dasharray="3 3"/><path d="M1115.5 108V271" stroke="#8a96a6" stroke-dasharray="3 3"/><path d="M1115.5 276V353" stroke="#8a96a6" stroke-dasharray="3 3"/><path d="M1147.5 108V271" stroke="#8a96a6" stroke-dasharray="3 3"/><path d="M1147.5 276V353" stroke="#8a96a6" stroke-dasharray="3 3"/><path d="M1179.5 108V271" stroke="#8a96a6" stroke-dasharray="3 3"/><path d="M1179.5 276V353" stroke="#8a96a6" stroke-dasharray="3 3"/><path d="M1211.5 108V271" stroke="#8a96a6" stroke-dasharray="3 3"/><path d="M1211.5 276V353" stroke="#8a96a6" stroke-dasharray="3 3"/><path d="M1243.5 108V271" stroke="#8a96a6" stroke-dasharray="3 3"/><path d="M1243.5 276V353" stroke="#8a96a6" stroke-dasharray="3 3"/><path d="M1275.5 108V271" stroke="#8a96a6" stroke-dasharray="3 3"/><path d="M1275.5 276V353" stroke="#8a96a6" stroke-dasharray="3 3"/><path d="M1307.5 108V271" stroke="#8a96a6" stroke-dasharray="3 3"/><path d="M1307.5 276V353" stroke="#8a96a6" stroke-dasharray="3 3"/><path d="M348 136.5H1309" stroke="#8a96a6" stroke-dasharray="3 3"/><path d="M348 169.5H1309" stroke="#8a96a6" stroke-dasharray="3 3"/><path d="M348 202.5H1309" stroke="#8a96a6" stroke-dasharray="3 3"/><path d="M348 235.5H1309" stroke="#8a96a6" stroke-dasharray="3 3"/><path d="M348 268.5H1309" stroke="#8a96a6" stroke-dasharray="3 3"/><path d="M348 299.5H1309" stroke="#8a96a6" stroke-dasharray="3 3"/><path d="M347 219.5H1311" stroke="#8a96a6"/><rect x="346.5" y="108.5" width="964" height="163" fill="none" stroke="#fff"/><rect x="346.5" y="273.5" width="964" height="80" fill="none" stroke="#fff"/><path d="M1311 136.5h3" stroke="#fff"/><path d="M1311 169.5h3" stroke="#fff"/><path d="M1311 202.5h3" stroke="#fff"/><path d="M1311 235.5h3" stroke="#fff"/><path d="M1311 268.5h3" stroke="#fff"/><path d="M1311 274.5h2" stroke="#fff"/><path d="M1311 299.5h2" stroke="#fff"/><path d="M1311 353.5h2" stroke="#fff"/><path d="M347.5 354V358" stroke="#fff"/><path d="M411.5 354V358" stroke="#fff"/><path d="M475.5 354V358" stroke="#fff"/><path d="M539.5 354V358" stroke="#fff"/><path d="M603.5 354V358" stroke="#fff"/><path d="M667.5 354V358" stroke="#fff"/><path d="M731.5 354V358" stroke="#fff"/><path d="M795.5 354V358" stroke="#fff"/><path d="M859.5 354V358" stroke="#fff"/><path d="M923.5 354V358" stroke="#fff"/><path d="M987.5 354V358" stroke="#fff"/><path d="M1051.5 354V358" stroke="#fff"/><path d="M1111 108.5h9l-4.5 5z" fill="#8c97a3"/><polyline points="347,176.6 363,180 379,185.3 395,187 411,188.2 427,191 443,193.5 475,196.4 515,194.3 535,194.4 555,193.5 571,190.7 587,187.7 603,184.7 619,183.3 635,180.6 651,175.6 667,172.6 699,169 731,163.5 749,161.5 763,160.2 779,159.5 795,158.4 811,158.8 827,160.4 843,162.6 853,166.5 870,175.7 891,186.6 923,202.6 947,212.5 957,217.7 971,218.9 995,223.2 1011,224.6 1035,222.5 1061,221.5 1079,221.5 1099,220.4" stroke="#ff0000" stroke-width="1.3" fill="none"/><path d="M347.5 211V215M345 213.5h2M348 213.5h2M355.5 211V221M353 213.5h2M356 220.5h2M363.5 210V221M361 219.5h2M364 215.5h2M371.5 206V220M369 215.5h2M372 207.5h2M379.5 204V213M377 207.5h2M380 205.5h2M387.5 191V208M385 206.5h2M388 193.5h2M395.5 193V203M393 193.5h2M396 202.5h2M403.5 195V203M401 200.5h2M404 196.5h2M411.5 195V210M409 196.5h2M412 199.5h2M419.5 193V215M417 199.5h2M420 207.5h2M427.5 197V218M425 206.5h2M428 206.5h2M435.5 197V214M433 206.5h2M436 207.5h2M443.5 206V221M441 206.5h2M444 209.5h2M451.5 201V215M449 209.5h2M452 202.5h2M459.5 197V214M457 202.5h2M460 206.5h2M467.5 197V213M465 206.5h2M468 200.5h2M475.5 199V229M473 200.5h2M476 208.5h2M483.5 181V216M481 208.5h2M484 199.5h2M491.5 189V201M489 199.5h2M492 189.5h2M499.5 180V194M497 189.5h2M500 187.5h2M507.5 183V193M505 187.5h2M508 186.5h2M515.5 184V199M513 186.5h2M516 197.5h2M523.5 194V203M521 198.5h2M524 196.5h2M531.5 190V199M529 196.5h2M532 194.5h2M539.5 190V199M537 194.5h2M540 193.5h2M547.5 191V203M545 193.5h2M548 195.5h2M555.5 166V198M553 194.5h2M556 176.5h2M563.5 170V182M561 176.5h2M564 176.5h2M571.5 163V177M569 176.5h2M572 169.5h2M579.5 155V172M577 169.5h2M580 162.5h2M587.5 155V166M585 162.5h2M588 163.5h2M595.5 151V164M593 163.5h2M596 158.5h2M603.5 159V179M601 159.5h2M604 175.5h2M611.5 169V183M609 176.5h2M612 176.5h2M619.5 161V179M617 176.5h2M620 166.5h2M627.5 157V170M625 166.5h2M628 159.5h2M635.5 148V167M633 159.5h2M636 165.5h2M643.5 158V182M641 164.5h2M644 176.5h2M651.5 135V192M649 176.5h2M652 138.5h2M659.5 117V145M657 138.5h2M660 141.5h2M667.5 134V159M665 142.5h2M668 158.5h2M675.5 155V172M673 158.5h2M676 159.5h2M683.5 158V179M681 159.5h2M684 170.5h2M691.5 154V171M689 170.5h2M692 160.5h2M699.5 148V166M697 160.5h2M700 149.5h2M707.5 146V155M705 148.5h2M708 154.5h2M715.5 144V155M713 154.5h2M716 146.5h2M723.5 144V154M721 147.5h2M724 147.5h2M731.5 145V151M729 147.5h2M732 148.5h2M739.5 145V153M737 148.5h2M740 148.5h2M747.5 139V155M745 148.5h2M748 148.5h2M755.5 145V156M753 148.5h2M756 150.5h2M763.5 149V161M761 149.5h2M764 156.5h2M771.5 151V159M769 156.5h2M772 153.5h2M779.5 150V157M777 153.5h2M780 152.5h2M787.5 143V158M785 152.5h2M788 152.5h2M795.5 137V154M793 152.5h2M796 150.5h2M803.5 150V172M801 150.5h2M804 169.5h2M811.5 155V173M809 168.5h2M812 162.5h2M819.5 158V174M817 162.5h2M820 166.5h2M827.5 163V174M825 166.5h2M828 167.5h2M835.5 159V186M833 167.5h2M836 182.5h2M843.5 166V199M841 182.5h2M844 193.5h2M851.5 186V209M849 193.5h2M852 200.5h2M859.5 195V234M857 200.5h2M860 221.5h2M867.5 212V233M865 221.5h2M868 214.5h2M875.5 213V227M873 216.5h2M876 217.5h2M883.5 203V239M881 217.5h2M884 235.5h2M891.5 234V251M889 235.5h2M892 246.5h2M899.5 241V252M897 246.5h2M900 248.5h2M907.5 246V250M905 247.5h2M908 247.5h2M915.5 244V253M913 245.5h2M916 251.5h2M923.5 251V257M921 251.5h2M924 254.5h2M931.5 254V268M929 254.5h2M932 260.5h2M939.5 255V267M937 260.5h2M940 258.5h2M947.5 256V267M945 258.5h2M948 258.5h2M955.5 256V264M953 258.5h2M956 260.5h2M963.5 254V263M961 259.5h2M964 257.5h2M971.5 257V265M969 257.5h2M972 258.5h2M979.5 238V262M977 258.5h2M980 239.5h2M987.5 229V248M985 239.5h2M988 236.5h2M995.5 216V237M993 236.5h2M996 222.5h2M1003.5 217V229M1001 222.5h2M1004 222.5h2M1011.5 209V223M1009 222.5h2M1012 214.5h2M1019.5 209V219M1017 214.5h2M1020 214.5h2M1027.5 212V223M1025 214.5h2M1028 214.5h2M1035.5 208V220M1033 214.5h2M1036 212.5h2M1043.5 209V219M1041 212.5h2M1044 217.5h2M1051.5 214V225M1049 217.5h2M1052 217.5h2M1059.5 217V230M1057 217.5h2M1060 217.5h2M1067.5 215V221M1065 217.5h2M1068 220.5h2M1075.5 214V221M1073 220.5h2M1076 217.5h2M1083.5 211V221M1081 217.5h2M1084 212.5h2M1091.5 211V220M1089 212.5h2M1092 216.5h2M1099.5 215V222M1097 218.5h2M1100 220.5h2" stroke="#00ff00" fill="none"/><path d="M347.5 299V344M355.5 299V344M363.5 299V343M371.5 299V341M379.5 299V338M387.5 299V333M395.5 299V331M403.5 299V327M411.5 299V326M419.5 299V324M427.5 299V322M435.5 299V321M443.5 299V321M451.5 299V319M459.5 299V318M467.5 299V316M475.5 299V315M483.5 299V313M491.5 299V310M499.5 299V307M507.5 299V303M515.5 299V303M523.5 299V303M531.5 299V303M563.5 297V300M571.5 293V300M579.5 290V300M587.5 287V300M595.5 285V300M603.5 286V300M611.5 287V300M619.5 286V300M627.5 285V300M635.5 283V300M643.5 285V300M651.5 282V300M659.5 279V300M667.5 280V300M675.5 281V300M683.5 284V300M691.5 284V300M699.5 282V300M707.5 284V300M715.5 283V300M723.5 282V300M731.5 283V300M739.5 283V300M747.5 283V300M755.5 284V300M763.5 286V300M771.5 287V300M779.5 288V300M787.5 289V300M795.5 288V300M803.5 293V300M811.5 294V300M819.5 296V300M827.5 298V300M843.5 299V306M851.5 299V311M859.5 299V318M867.5 299V322M875.5 299V326M883.5 299V331M891.5 299V336M899.5 299V340M907.5 299V343M915.5 299V346M923.5 299V347M931.5 299V349M939.5 299V350M947.5 299V350M955.5 299V350M963.5 299V348M971.5 299V347M979.5 299V342M987.5 299V339M995.5 299V331M1003.5 299V325M1011.5 299V320M1019.5 299V315M1027.5 299V311M1035.5 299V308M1043.5 299V306M1051.5 299V304M1059.5 299V303M1067.5 299V302" stroke="#d0d0d0" fill="none"/><polyline points="347,343.7 379,344.3 395,342.5 411,338 427,333 443,327.5 459,324.7 475,320 491,317 507,313.5 523,309 539,307.5 563,304.3 571,300.5 587,297.8 603,292.9 619,289.4 635,286.3 651,284.5 667,283.1 683,282.4 715,281.7 765,282.4 795,285.2 827,289.4 859,299.1 875,308.5 891,313.8 907,321.8 923,330.5 939,337.4 955,344.1 971,347.2 987,347.9 1003,345.8 1019,339.5 1035,330.5 1051,319.3 1067,312.4 1085,306.1 1099,301.5" stroke="#ff0000" stroke-width="1.1" stroke-dasharray="3 3" fill="none"/></svg>
<div class="t" style="left:351px;top:111px;font-size:9.4px;line-height:11px;color:#fff">EURUSD,H1&nbsp; 1.11357 1.11383 1.11344 1.11349</div>
<div class="t" style="left:351px;top:277px;font-size:9.4px;line-height:11px;color:#fff">MACD(12,26,9) 0.000017 -0.000118</div>
<div class="t" style="left:1315px;top:131px;font-size:9.4px;line-height:11px;color:#fff">1.12010</div>
<div class="t" style="left:1315px;top:164px;font-size:9.4px;line-height:11px;color:#fff">1.11745</div>
<div class="t" style="left:1315px;top:197px;font-size:9.4px;line-height:11px;color:#fff">1.11485</div>
<div class="t" style="left:1315px;top:230px;font-size:9.4px;line-height:11px;color:#fff">1.11220</div>
<div class="t" style="left:1315px;top:263px;font-size:9.4px;line-height:11px;color:#fff">1.10960</div>
<div style="left:1312px;top:214px;width:41px;height:11px;background:#fff"></div>
<div class="t" style="left:1315px;top:213px;font-size:9.4px;line-height:11px;color:#000">1.11349</div>
<div class="t" style="left:1314px;top:274px;font-size:9.4px;line-height:11px;color:#fff">0.000966</div>
<div class="t" style="left:1314px;top:294px;font-size:9.4px;line-height:11px;color:#fff">0.00</div>
<div class="t" style="left:1314px;top:342px;font-size:9.4px;line-height:11px;color:#fff">-0.002113</div>
<div class="t" style="left:346.5px;top:358.6px;font-size:10px;line-height:11px;color:#fff;transform:scaleX(0.95);transform-origin:0 0">25 May 2016</div>
<div class="t" style="left:410.5px;top:358.6px;font-size:10px;line-height:11px;color:#fff;transform:scaleX(0.95);transform-origin:0 0">25 May 08:00</div>
<div class="t" style="left:474.5px;top:358.6px;font-size:10px;line-height:11px;color:#fff;transform:scaleX(0.95);transform-origin:0 0">25 May 16:00</div>
<div class="t" style="left:538.5px;top:358.6px;font-size:10px;line-height:11px;color:#fff;transform:scaleX(0.95);transform-origin:0 0">26 May 00:00</div>
<div class="t" style="left:602.5px;top:358.6px;font-size:10px;line-height:11px;color:#fff;transform:scaleX(0.95);transform-origin:0 0">26 May 08:00</div>
<div class="t" style="left:666.5px;top:358.6px;font-size:10px;line-height:11px;color:#fff;transform:scaleX(0.95);transform-origin:0 0">26 May 16:00</div>
<div class="t" style="left:730.5px;top:358.6px;font-size:10px;line-height:11px;color:#fff;transform:scaleX(0.95);transform-origin:0 0">27 May 00:00</div>
<div class="t" style="left:794.5px;top:358.6px;font-size:10px;line-height:11px;color:#fff;transform:scaleX(0.95);transform-origin:0 0">27 May 08:00</div>
<div class="t" style="left:858.5px;top:358.6px;font-size:10px;line-height:11px;color:#fff;transform:scaleX(0.95);transform-origin:0 0">27 May 16:00</div>
<div class="t" style="left:922.5px;top:358.6px;font-size:10px;line-height:11px;color:#fff;transform:scaleX(0.95);transform-origin:0 0">30 May 01:00</div>
<div class="t" style="left:986.5px;top:358.6px;font-size:10px;line-height:11px;color:#fff;transform:scaleX(0.95);transform-origin:0 0">30 May 09:00</div>
<div class="t" style="left:1050.5px;top:358.6px;font-size:10px;line-height:11px;color:#fff;transform:scaleX(0.95);transform-origin:0 0">30 May 17:00</div>
<div style="left:343px;top:377px;width:1012px;height:1px;background:#000"></div>
<div style="left:343px;top:378px;width:1012px;height:19px;background:#f0f0f0"></div>
<div class="t" style="left:359.5px;top:380px;font-size:12px;line-height:14px;color:#6d6d6d;transform:scaleX(0.879);transform-origin:0 0">GBPUSD,H4</div>
<div class="t" style="left:443px;top:380px;font-size:12px;line-height:14px;color:#6d6d6d;transform:scaleX(0.946);transform-origin:0 0">USDCHF,M1</div>
<div class="t" style="left:530px;top:380px;font-size:12px;line-height:14px;color:#6d6d6d;transform:scaleX(0.930);transform-origin:0 0">OIL.WTI.,H1</div>
<div class="t" style="left:616px;top:380px;font-size:12px;line-height:14px;color:#6d6d6d;transform:scaleX(0.895);transform-origin:0 0">EURGBP.,H1</div>
<div class="t" style="left:704px;top:380px;font-size:12px;line-height:14px;color:#6d6d6d;transform:scaleX(0.890);transform-origin:0 0">EURUSD,Daily</div>
<div class="t" style="left:799.3px;top:380px;font-size:12px;line-height:14px;color:#6d6d6d;transform:scaleX(0.903);transform-origin:0 0">DE.30..,H1</div>
<div class="t" style="left:874.6px;top:380px;font-size:12px;line-height:14px;color:#6d6d6d;transform:scaleX(0.901);transform-origin:0 0">OILs..,H1</div>
<div class="t" style="left:942.7px;top:380px;font-size:12px;line-height:14px;color:#6d6d6d;transform:scaleX(0.916);transform-origin:0 0">EURUSD,H1 (visual)</div>
<div class="t" style="left:1067px;top:380px;font-size:12px;line-height:14px;color:#6d6d6d;transform:scaleX(0.916);transform-origin:0 0">EURUSD,H1 (visual)</div>
<div class="t" style="left:1191.3px;top:380px;font-size:12px;line-height:14px;color:#6d6d6d;transform:scaleX(0.916);transform-origin:0 0">EURUSD,H1 (visual)</div>
<div style="left:432px;top:380px;width:1px;height:14px;background:#6a6a6a"></div>
<div style="left:520px;top:380px;width:1px;height:14px;background:#6a6a6a"></div>
<div style="left:604px;top:380px;width:1px;height:14px;background:#6a6a6a"></div>
<div style="left:692px;top:380px;width:1px;height:14px;background:#6a6a6a"></div>
<div style="left:788px;top:380px;width:1px;height:14px;background:#6a6a6a"></div>
<div style="left:864px;top:380px;width:1px;height:14px;background:#6a6a6a"></div>
<div style="left:932px;top:380px;width:1px;height:14px;background:#6a6a6a"></div>
<div style="left:1056px;top:380px;width:1px;height:14px;background:#6a6a6a"></div>
<div style="left:1180px;top:380px;width:1px;height:14px;background:#6a6a6a"></div>
<div style="left:1304px;top:380px;width:1px;height:14px;background:#6a6a6a"></div>
<div style="left:1315px;top:382px;width:1px;height:9px;background:#c0c0c0"></div>
<svg style="left:1322px;top:382px" width="30" height="10"><path d="M6 1v8l-4-4z" fill="#b0b0b0"/><path d="M20 1v8l4-4z" fill="#000"/></svg>
<div style="left:7px;top:396px;width:1348px;height:1px;background:#a0a0a0"></div>
<div style="left:7px;top:397px;width:1348px;height:1px;background:#fff"></div>
<svg style="left:11px;top:403px" width="7" height="7"><path d="M0.5 0.5l6 6M6.5 0.5l-6 6" stroke="#000" stroke-width="1.9"/></svg>
<div style="left:8px;top:415px;width:13px;height:275px;background:#cedbe8"></div>
<div class="t" style="left:8px;top:689px;transform-origin:0 0;transform:rotate(-90deg);font-size:11px;line-height:13px;color:#000">Tester</div>
<div style="left:22px;top:401px;width:1329px;height:268px;background:#fff;border-bottom:1px solid #000"></div>
<div style="left:22px;top:401px;width:1px;height:268px;background:#a0a0a0"></div>
<div style="left:22px;top:401px;width:1329px;height:1px;background:#a0a0a0"></div>
<div style="left:1352px;top:401px;width:1px;height:290px;background:#fff"></div>
<div style="left:22px;top:690px;width:1331px;height:1px;background:#fff"></div>
<svg style="left:0;top:0" width="1365" height="723"><path d="M66.5 407V651" stroke="#c8c8c8" stroke-dasharray="3 3"/><path d="M106.5 407V651" stroke="#c8c8c8" stroke-dasharray="3 3"/><path d="M146.5 407V651" stroke="#c8c8c8" stroke-dasharray="3 3"/><path d="M186.5 407V651" stroke="#c8c8c8" stroke-dasharray="3 3"/><path d="M226.5 407V651" stroke="#c8c8c8" stroke-dasharray="3 3"/><path d="M266.5 407V651" stroke="#c8c8c8" stroke-dasharray="3 3"/><path d="M306.5 407V651" stroke="#c8c8c8" stroke-dasharray="3 3"/><path d="M346.5 407V651" stroke="#c8c8c8" stroke-dasharray="3 3"/><path d="M385.5 407V651" stroke="#c8c8c8" stroke-dasharray="3 3"/><path d="M425.5 407V651" stroke="#c8c8c8" stroke-dasharray="3 3"/><path d="M465.5 407V651" stroke="#c8c8c8" stroke-dasharray="3 3"/><path d="M505.5 407V651" stroke="#c8c8c8" stroke-dasharray="3 3"/><path d="M545.5 407V651" stroke="#c8c8c8" stroke-dasharray="3 3"/><path d="M585.5 407V651" stroke="#c8c8c8" stroke-dasharray="3 3"/><path d="M625.5 407V651" stroke="#c8c8c8" stroke-dasharray="3 3"/><path d="M665.5 407V651" stroke="#c8c8c8" stroke-dasharray="3 3"/><path d="M704.5 407V651" stroke="#c8c8c8" stroke-dasharray="3 3"/><path d="M744.5 407V651" stroke="#c8c8c8" stroke-dasharray="3 3"/><path d="M784.5 407V651" stroke="#c8c8c8" stroke-dasharray="3 3"/><path d="M824.5 407V651" stroke="#c8c8c8" stroke-dasharray="3 3"/><path d="M864.5 407V651" stroke="#c8c8c8" stroke-dasharray="3 3"/><path d="M904.5 407V651" stroke="#c8c8c8" stroke-dasharray="3 3"/><path d="M944.5 407V651" stroke="#c8c8c8" stroke-dasharray="3 3"/><path d="M984.5 407V651" stroke="#c8c8c8" stroke-dasharray="3 3"/><path d="M1024.5 407V651" stroke="#c8c8c8" stroke-dasharray="3 3"/><path d="M1063.5 407V651" stroke="#c8c8c8" stroke-dasharray="3 3"/><path d="M1103.5 407V651" stroke="#c8c8c8" stroke-dasharray="3 3"/><path d="M1143.5 407V651" stroke="#c8c8c8" stroke-dasharray="3 3"/><path d="M1183.5 407V651" stroke="#c8c8c8" stroke-dasharray="3 3"/><path d="M1223.5 407V651" stroke="#c8c8c8" stroke-dasharray="3 3"/><path d="M1263.5 407V651" stroke="#c8c8c8" stroke-dasharray="3 3"/><path d="M28 426.5H1306" stroke="#c8c8c8" stroke-dasharray="3 3"/><path d="M28 458.5H1306" stroke="#c8c8c8" stroke-dasharray="3 3"/><path d="M28 490.5H1306" stroke="#c8c8c8" stroke-dasharray="3 3"/><path d="M28 522.5H1306" stroke="#c8c8c8" stroke-dasharray="3 3"/><path d="M28 554.5H1306" stroke="#c8c8c8" stroke-dasharray="3 3"/><path d="M28 586.5H1306" stroke="#c8c8c8" stroke-dasharray="3 3"/><path d="M28 618.5H1306" stroke="#c8c8c8" stroke-dasharray="3 3"/><path d="M27.5 406V651.5H1306.5V406.5H27" stroke="#000" fill="none"/><path d="M1307 427.5h2" stroke="#000"/><path d="M1307 459.5h2" stroke="#000"/><path d="M1307 491.5h2" stroke="#000"/><path d="M1307 523.5h2" stroke="#000"/><path d="M1307 555.5h2" stroke="#000"/><path d="M1307 587.5h2" stroke="#000"/><path d="M1307 619.5h2" stroke="#000"/><path d="M1307 651.5h2" stroke="#000"/><path d="M27.5 652v2" stroke="#000"/><path d="M66.5 652v2" stroke="#000"/><path d="M106.5 652v2" stroke="#000"/><path d="M146.5 652v2" stroke="#000"/><path d="M186.5 652v2" stroke="#000"/><path d="M226.5 652v2" stroke="#000"/><path d="M266.5 652v2" stroke="#000"/><path d="M306.5 652v2" stroke="#000"/><path d="M346.5 652v2" stroke="#000"/><path d="M385.5 652v2" stroke="#000"/><path d="M425.5 652v2" stroke="#000"/><path d="M465.5 652v2" stroke="#000"/><path d="M505.5 652v2" stroke="#000"/><path d="M545.5 652v2" stroke="#000"/><path d="M585.5 652v2" stroke="#000"/><path d="M625.5 652v2" stroke="#000"/><path d="M665.5 652v2" stroke="#000"/><path d="M704.5 652v2" stroke="#000"/><path d="M744.5 652v2" stroke="#000"/><path d="M784.5 652v2" stroke="#000"/><path d="M824.5 652v2" stroke="#000"/><path d="M864.5 652v2" stroke="#000"/><path d="M904.5 652v2" stroke="#000"/><path d="M944.5 652v2" stroke="#000"/><path d="M984.5 652v2" stroke="#000"/><path d="M1024.5 652v2" stroke="#000"/><path d="M1063.5 652v2" stroke="#000"/><path d="M1103.5 652v2" stroke="#000"/><path d="M1143.5 652v2" stroke="#000"/><path d="M1183.5 652v2" stroke="#000"/><path d="M1223.5 652v2" stroke="#000"/><path d="M1263.5 652v2" stroke="#000"/><polyline points="28,640 67,431 107,597 147,597 187,534 227,523 267,529 307,545" stroke="#00b000" stroke-width="1.2" fill="none"/><path d="M28 640L307 430" stroke="#0000a8" stroke-width="2.5"/></svg>
<div class="t" style="left:32px;top:409px;font-size:9.4px;line-height:12px"><span style="color:#1010a0">Balance</span><span style="color:#505080"> / </span><span style="color:#22a022">Equity</span><span style="color:#000080"> / </span><span style="color:#ff2020">Open prices only (fastest method to analyze the bar just completed, only for EAs that explicitly control bar opening)</span></div>
<div class="t" style="left:1311px;top:422px;font-size:9.4px;line-height:12px;color:#000">13518</div>
<div class="t" style="left:1311px;top:454px;font-size:9.4px;line-height:12px;color:#000">12991</div>
<div class="t" style="left:1311px;top:486px;font-size:9.4px;line-height:12px;color:#000">12463</div>
<div class="t" style="left:1311px;top:518px;font-size:9.4px;line-height:12px;color:#000">11936</div>
<div class="t" style="left:1311px;top:550px;font-size:9.4px;line-height:12px;color:#000">11408</div>
<div class="t" style="left:1311px;top:582px;font-size:9.4px;line-height:12px;color:#000">10881</div>
<div class="t" style="left:1311px;top:614px;font-size:9.4px;line-height:12px;color:#000">10353</div>
<div class="t" style="left:1311px;top:646px;font-size:9.4px;line-height:12px;color:#000">9826</div>
<div class="t" style="left:28px;top:653px;font-size:9.4px;line-height:12px;color:#000">0</div>
<div class="t" style="left:26px;width:40px;text-align:right;top:653px;font-size:9.4px;line-height:12px;color:#000">1</div>
<div class="t" style="left:66px;width:40px;text-align:right;top:653px;font-size:9.4px;line-height:12px;color:#000">2</div>
<div class="t" style="left:106px;width:40px;text-align:right;top:653px;font-size:9.4px;line-height:12px;color:#000">3</div>
<div class="t" style="left:146px;width:40px;text-align:right;top:653px;font-size:9.4px;line-height:12px;color:#000">4</div>
<div class="t" style="left:186px;width:40px;text-align:right;top:653px;font-size:9.4px;line-height:12px;color:#000">5</div>
<div class="t" style="left:226px;width:40px;text-align:right;top:653px;font-size:9.4px;line-height:12px;color:#000">6</div>
<div class="t" style="left:266px;width:40px;text-align:right;top:653px;font-size:9.4px;line-height:12px;color:#000">7</div>
<div class="t" style="left:306px;width:40px;text-align:right;top:653px;font-size:9.4px;line-height:12px;color:#000">8</div>
<div class="t" style="left:345px;width:40px;text-align:right;top:653px;font-size:9.4px;line-height:12px;color:#000">9</div>
<div class="t" style="left:385px;width:40px;text-align:right;top:653px;font-size:9.4px;line-height:12px;color:#000">10</div>
<div class="t" style="left:425px;width:40px;text-align:right;top:653px;font-size:9.4px;line-height:12px;color:#000">11</div>
<div class="t" style="left:465px;width:40px;text-align:right;top:653px;font-size:9.4px;line-height:12px;color:#000">12</div>
<div class="t" style="left:505px;width:40px;text-align:right;top:653px;font-size:9.4px;line-height:12px;color:#000">13</div>
<div class="t" style="left:545px;width:40px;text-align:right;top:653px;font-size:9.4px;line-height:12px;color:#000">14</div>
<div class="t" style="left:585px;width:40px;text-align:right;top:653px;font-size:9.4px;line-height:12px;color:#000">15</div>
<div class="t" style="left:625px;width:40px;text-align:right;top:653px;font-size:9.4px;line-height:12px;color:#000">16</div>
<div class="t" style="left:664px;width:40px;text-align:right;top:653px;font-size:9.4px;line-height:12px;color:#000">17</div>
<div class="t" style="left:704px;width:40px;text-align:right;top:653px;font-size:9.4px;line-height:12px;color:#000">18</div>
<div class="t" style="left:744px;width:40px;text-align:right;top:653px;font-size:9.4px;line-height:12px;color:#000">19</div>
<div class="t" style="left:784px;width:40px;text-align:right;top:653px;font-size:9.4px;line-height:12px;color:#000">20</div>
<div class="t" style="left:824px;width:40px;text-align:right;top:653px;font-size:9.4px;line-height:12px;color:#000">21</div>
<div class="t" style="left:864px;width:40px;text-align:right;top:653px;font-size:9.4px;line-height:12px;color:#000">22</div>
<div class="t" style="left:904px;width:40px;text-align:right;top:653px;font-size:9.4px;line-height:12px;color:#000">23</div>
<div class="t" style="left:944px;width:40px;text-align:right;top:653px;font-size:9.4px;line-height:12px;color:#000">24</div>
<div class="t" style="left:984px;width:40px;text-align:right;top:653px;font-size:9.4px;line-height:12px;color:#000">25</div>
<div class="t" style="left:1023px;width:40px;text-align:right;top:653px;font-size:9.4px;line-height:12px;color:#000">26</div>
<div class="t" style="left:1063px;width:40px;text-align:right;top:653px;font-size:9.4px;line-height:12px;color:#000">27</div>
<div class="t" style="left:1103px;width:40px;text-align:right;top:653px;font-size:9.4px;line-height:12px;color:#000">28</div>
<div class="t" style="left:1143px;width:40px;text-align:right;top:653px;font-size:9.4px;line-height:12px;color:#000">29</div>
<div class="t" style="left:1183px;width:40px;text-align:right;top:653px;font-size:9.4px;line-height:12px;color:#000">30</div>
<div class="t" style="left:1223px;width:40px;text-align:right;top:653px;font-size:9.4px;line-height:12px;color:#000">31</div>
<div style="left:23px;top:669px;width:1328px;height:21px;background:#f0f0f0"></div>
<div style="left:144px;top:668px;width:52px;height:20px;background:#fff;border:1px solid #000;border-top:none"></div>
<div style="left:145px;top:668px;width:50px;height:1px;background:#fff"></div>
<div class="t" style="left:35.5px;top:671px;font-size:12px;line-height:15px;color:#6d6d6d;transform:scaleX(0.956);transform-origin:0 0">Settings</div>
<div style="left:87px;top:672px;width:1px;height:14px;background:#555"></div>
<div class="t" style="left:97px;top:671px;font-size:12px;line-height:15px;color:#6d6d6d;transform:scaleX(0.925);transform-origin:0 0">Results</div>
<div class="t" style="left:154.5px;top:671px;font-size:12px;line-height:15px;color:#000;transform:scaleX(0.93);transform-origin:0 0">Graph</div>
<div class="t" style="left:206.5px;top:671px;font-size:12px;line-height:15px;color:#6d6d6d;transform:scaleX(0.958);transform-origin:0 0">Report</div>
<div style="left:251px;top:672px;width:1px;height:14px;background:#555"></div>
<div class="t" style="left:261px;top:671px;font-size:12px;line-height:15px;color:#6d6d6d;transform:scaleX(0.965);transform-origin:0 0">Journal</div>
<div style="left:310px;top:672px;width:1px;height:14px;background:#555"></div>
<div style="left:6px;top:693px;width:1350px;height:1px;background:#a0a0a0"></div>
<div style="left:7px;top:694px;width:1348px;height:23px;background:#f0f0f0"></div>
<div style="left:6px;top:717px;width:1350px;height:1px;background:#dadada"></div>
<div style="left:6px;top:718px;width:1356px;height:5px;background:#fbfbfb"></div>
<div class="t" style="left:9px;top:700px;font-size:12.5px;line-height:14px;color:#000;transform:scaleX(0.877);transform-origin:0 0">For Help, press F1</div>
<div style="left:642px;top:696px;width:1px;height:19px;background:#a0a0a0"></div>
<div style="left:758px;top:696px;width:1px;height:19px;background:#a0a0a0"></div>
<div style="left:860px;top:696px;width:1px;height:19px;background:#a0a0a0"></div>
<div style="left:1140px;top:696px;width:1px;height:19px;background:#a0a0a0"></div>
<div style="left:1206px;top:696px;width:1px;height:19px;background:#a0a0a0"></div>
<div class="t" style="left:648px;top:700px;font-size:12.5px;line-height:14px;color:#000;transform:scaleX(0.944);transform-origin:0 0">Default</div>
<svg style="left:1211px;top:700px" width="26" height="13"><rect x="1" y="0" width="2" height="10.0" fill="#5a7a10"/><rect x="1" y="10.0" width="2" height="3.0" fill="#0d3a5a"/><rect x="4" y="0" width="2" height="8.7" fill="#5a7a10"/><rect x="4" y="8.7" width="2" height="4.3" fill="#0d3a5a"/><rect x="7" y="0" width="2" height="7.4" fill="#5a7a10"/><rect x="7" y="7.4" width="2" height="5.6" fill="#0d3a5a"/><rect x="10" y="0" width="2" height="6.1" fill="#5a7a10"/><rect x="10" y="6.1" width="2" height="6.9" fill="#0d3a5a"/><rect x="13" y="0" width="2" height="4.8" fill="#5a7a10"/><rect x="13" y="4.8" width="2" height="8.2" fill="#0d3a5a"/><rect x="16" y="0" width="2" height="3.5" fill="#5a7a10"/><rect x="16" y="3.5" width="2" height="9.5" fill="#0d3a5a"/><rect x="19" y="0" width="2" height="2.2" fill="#5a7a10"/><rect x="19" y="2.2" width="2" height="10.8" fill="#0d3a5a"/><rect x="22" y="0" width="2" height="0.0" fill="#5a7a10"/><rect x="22" y="0.0" width="2" height="13.0" fill="#0d3a5a"/></svg>
<div class="t" style="left:1240px;top:700px;font-size:12.5px;line-height:14px;color:#000;transform:scaleX(0.905);transform-origin:0 0">13304/5 kb</div>
<svg style="left:1340px;top:702px" width="15" height="15"><path d="M14 1L1 14M14 5L5 14M14 9L9 14" stroke="#a0a0a0" stroke-width="1"/><path d="M14 2.5L2.5 14M14 6.5L6.5 14M14 10.5L10.5 14" stroke="#fff" stroke-width="1"/></svg>
</body></html>
